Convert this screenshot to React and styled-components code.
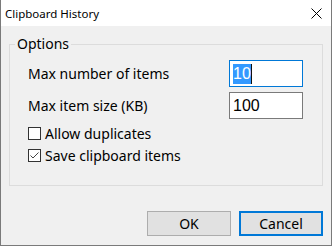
import React from "react";
import styled, { createGlobalStyle } from "styled-components";

const Global = createGlobalStyle`
  html, body { margin: 0; padding: 0; background: #f0f0f0; }
  * { box-sizing: border-box; }
`;

const Window = styled.div`
  width: 332px;
  height: 246px;
  display: flex;
  flex-direction: column;
  border: 1px solid #7a7a7a;
  border-top: none;
  font-family: "Noto Sans", "Open Sans", sans-serif;
  color: #000;
`;

const TitleBar = styled.div`
  height: 26px;
  flex: none;
  background: #fff;
  display: flex;
  align-items: center;
  justify-content: space-between;
  padding: 0 9px 0 4px;
  font-size: 11.5px;
`;

const Body = styled.div`
  flex: 1;
  background: #f0f0f0;
  padding: 8px 8px 0 8px;
  display: flex;
  flex-direction: column;
`;

const Group = styled.fieldset`
  margin: 0;
  border: 1px solid #dcdcdc;
  padding: 6px 19px 19px 18px;
  min-width: 0;
`;

const Legend = styled.legend`
  margin-left: -13px;
  padding: 0 2px;
  font-size: 14px;
  line-height: 20px;
`;

const FieldRow = styled.div`
  display: flex;
  align-items: center;
  justify-content: space-between;
  height: 27px;
  margin-bottom: 5px;
  font-size: 14px;
`;

const TextBox = styled.div`
  width: 74px;
  height: 27px;
  border: 1px solid ${(p) => (p.$focused ? "#0078d7" : "#7a7a7a")};
  background: #fff;
  display: flex;
  align-items: center;
  padding-left: 3px;
  font-family: "Liberation Sans", Arial, sans-serif;
  font-size: 16px;
`;

const Selected = styled.span`
  background: #3399ff;
  color: #fff;
  line-height: 20px;
`;

const Caret = styled.span`
  width: 1px;
  height: 20px;
  background: #111;
`;

const CheckRow = styled.label`
  display: flex;
  align-items: center;
  gap: 4px;
  height: 22px;
  font-size: 14px;
  &:first-of-type { margin-top: -2px; }
`;

const Box = styled.span`
  width: 13px;
  height: 13px;
  border: 1px solid #333;
  background: #fff;
  display: flex;
  align-items: center;
  justify-content: center;
`;

const Buttons = styled.div`
  display: flex;
  justify-content: flex-end;
  gap: 8px;
  margin-top: 25px;
`;

const Button = styled.button`
  width: 84px;
  height: 25px;
  padding: 0;
  background: #e1e1e1;
  border: ${(p) => (p.$default ? "2px solid #0078d7" : "1px solid #adadad")};
  font-family: "Noto Sans", "Open Sans", sans-serif;
  font-size: 14px;
  color: #000;
`;

function Check({ checked, children }) {
  return (
    <CheckRow>
      <Box>
        {checked && (
          <svg width="11" height="11" viewBox="0 0 11 11">
            <path d="M1.5 5.5 L4 8 L9.5 2.5" fill="none" stroke="#444" strokeWidth="1" />
          </svg>
        )}
      </Box>
      {children}
    </CheckRow>
  );
}

export default function App() {
  return (
    <>
      <Global />
      <Window>
        <TitleBar>
          <span>Clipboard History</span>
          <svg width="11" height="11" viewBox="0 0 11 11">
            <path d="M0.5 0.5 L10.5 10.5 M10.5 0.5 L0.5 10.5" stroke="#000" strokeWidth="1" />
          </svg>
        </TitleBar>
        <Body>
          <Group>
            <Legend>Options</Legend>
            <FieldRow>
              <span>Max number of items</span>
              <TextBox $focused>
                <Selected>10</Selected>
                <Caret />
              </TextBox>
            </FieldRow>
            <FieldRow>
              <span>Max item size (KB)</span>
              <TextBox>100</TextBox>
            </FieldRow>
            <Check>Allow duplicates</Check>
            <Check checked>Save clipboard items</Check>
          </Group>
          <Buttons>
            <Button>OK</Button>
            <Button $default>Cancel</Button>
          </Buttons>
        </Body>
      </Window>
    </>
  );
}
